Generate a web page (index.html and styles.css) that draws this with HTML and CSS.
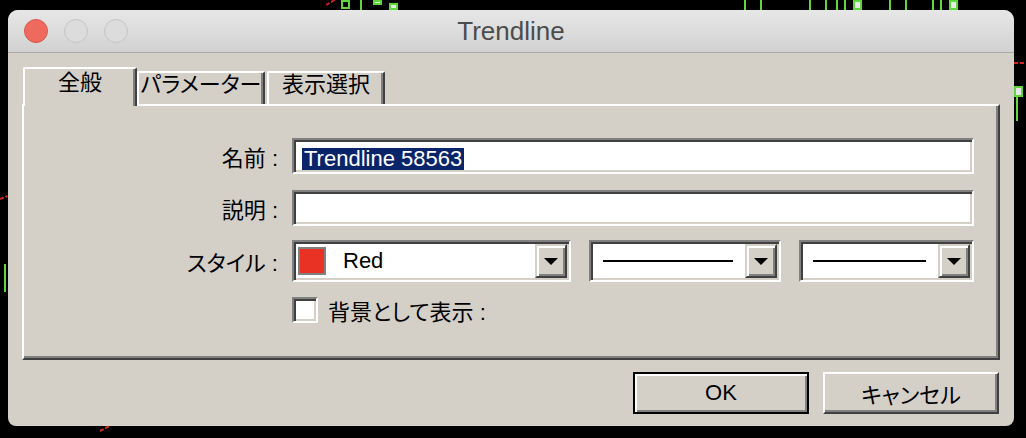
FILE: index.html
```html
<!DOCTYPE html>
<html lang="ja">
<head>
    <meta charset="UTF-8">
    <title>Trendline</title>
    <link rel="stylesheet" href="styles.css">
</head>
<body>
    <!-- chart behind the dialog -->
    <div class="chart">
        <span class="dash" style="left:326px;top:4px;width:16px;transform:rotate(-30deg)"></span>
        <span class="box" style="left:341px;top:0;height:9px"></span>
        <span class="wick" style="left:360px;top:0;height:10px"></span>
        <span class="box white" style="left:373px;top:0;height:5px"></span>
        <span class="box white" style="left:389px;top:3px;height:7px"></span>
        <span class="wick" style="left:744px;top:0;height:10px"></span>
        <span class="wick" style="left:760px;top:0;height:10px"></span>
        <span class="wick" style="left:809px;top:0;height:10px"></span>
        <span class="wick" style="left:825px;top:0;height:10px"></span>
        <span class="wick" style="left:836px;top:0;height:10px"></span>
        <span class="wick" style="left:844px;top:0;height:10px"></span>
        <span class="box white" style="left:853px;top:0;height:10px"></span>
        <span class="wick" style="left:889px;top:0;height:10px"></span>
        <span class="wick" style="left:905px;top:0;height:10px"></span>
        <span class="wick" style="left:932px;top:0;height:10px"></span>
        <span class="wick" style="left:940px;top:0;height:10px"></span>
        <span class="box white" style="left:949px;top:0;height:10px"></span>
        <span class="dash" style="left:1014px;top:62px;width:12px"></span>
        <span class="box white" style="left:1014px;top:86px;height:11px"></span>
        <span class="wick" style="left:1016px;top:97px;height:24px"></span>
        <span class="dash" style="left:0;top:198px;width:8px;transform:rotate(-20deg)"></span>
        <span class="wick" style="left:4px;top:264px;height:28px"></span>
        <span class="dash" style="left:100px;top:430px;width:22px;transform:rotate(-28deg)"></span>
    </div>

    <div class="window">
        <div class="titlebar">
            <div class="lights">
                <span class="light close"></span>
                <span class="light"></span>
                <span class="light"></span>
            </div>
            <div class="title">Trendline</div>
        </div>

        <div class="dialog">
            <div class="tabs">
                <div class="tab active tab-general">全般</div>
                <div class="tab tab-params">パラメーター</div>
                <div class="tab tab-view">表示選択</div>
            </div>

            <div class="panel">
                <div class="row row-name">
                    <label class="label">名前 :</label>
                    <div class="field">
                        <span class="selected">Trendline 58563</span>
                    </div>
                </div>

                <div class="row row-desc">
                    <label class="label">説明 :</label>
                    <div class="field"></div>
                </div>

                <div class="row row-style">
                    <label class="label">スタイル :</label>
                    <div class="select select-color">
                        <span class="swatch"></span>
                        <span class="select-text">Red</span>
                        <span class="drop"><i class="arrow"></i></span>
                    </div>
                    <div class="select select-line">
                        <span class="line-sample"></span>
                        <span class="drop"><i class="arrow"></i></span>
                    </div>
                    <div class="select select-width">
                        <span class="line-sample"></span>
                        <span class="drop"><i class="arrow"></i></span>
                    </div>
                </div>

                <div class="row row-check">
                    <span class="label"></span>
                    <span class="checkbox"></span>
                    <span class="check-label">背景として表示 :</span>
                </div>
            </div>

            <div class="buttons">
                <button class="btn btn-default">OK</button>
                <button class="btn">キャンセル</button>
            </div>
        </div>
    </div>
</body>
</html>
```

FILE: styles.css
```css
* {
    margin: 0;
    padding: 0;
    box-sizing: border-box;
}

body {
    background: #000;
    width: 1026px;
    height: 438px;
    overflow: hidden;
    position: relative;
    font-family: "Liberation Sans", "Noto Sans CJK JP", sans-serif;
}

/* chart marks */
.chart span {
    position: absolute;
    display: block;
}

.wick {
    width: 2px;
    background: #5fd63c;
}

.box {
    width: 9px;
    border: 2px solid #5fd63c;
}

.box.white {
    background: #e8e8e8;
}

.dash {
    height: 2px;
    background: repeating-linear-gradient(90deg, #d0281c 0 4px, transparent 4px 6px);
    transform-origin: left center;
}

/* window */
.window {
    position: relative;
    z-index: 1;
    margin: 10px 0 0 8px;
    width: 1006px;
    height: 416px;
    background: #d4d0c8;
    border-radius: 10px 10px 8px 8px;
    overflow: hidden;
}

.titlebar {
    height: 43px;
    background: linear-gradient(#e7e7e7, #d2d2d2);
    border-bottom: 1px solid #a9a9a9;
    display: flex;
    align-items: center;
    position: relative;
}

.lights {
    display: flex;
    gap: 16px;
    padding-left: 16px;
}

.light {
    width: 24px;
    height: 24px;
    border-radius: 50%;
    background: #dcdcdc;
    border: 1px solid #c4c4c4;
}

.light.close {
    background: #ee6a5e;
    border-color: #d8574c;
}

.title {
    position: absolute;
    left: 0;
    right: 0;
    text-align: center;
    font-size: 26px;
    color: #4c4c4c;
    pointer-events: none;
}

/* dialog body */
.dialog {
    padding-top: 14px;
    font-size: 22px;
    color: #000;
}

.tabs {
    display: flex;
    align-items: flex-end;
    padding-left: 15px;
    margin-bottom: -2px;
}

.tab {
    background: #d4d0c8;
    border-top: 2px solid #fff;
    border-left: 2px solid #fff;
    border-right: 2px solid #404040;
    box-shadow: inset -2px 0 #808080;
    border-radius: 2px 2px 0 0;
    text-align: center;
    line-height: 24px;
    height: 33px;
    margin-bottom: 2px;
    font-feature-settings: "palt";
}

.tab.active {
    position: relative;
    z-index: 1;
    height: 39px;
    padding-top: 2px;
    margin-bottom: 0;
}

.tab-general { width: 114px; }
.tab-params { width: 128px; }
.tab-view { width: 118px; margin-left: 2px; }

.panel {
    margin: 0 14px;
    height: 256px;
    border: 2px solid;
    border-color: #fff #404040 #404040 #fff;
    box-shadow: inset -2px -2px #808080;
    padding: 32px 24px 0 14px;
}

.row {
    display: flex;
    align-items: center;
}

.row-desc { margin-top: 16px; }
.row-style { margin-top: 14px; }
.row-check { margin-top: 12px; }

.label {
    width: 240px;
    margin-right: 14px;
    text-align: right;
    flex-shrink: 0;
    font-feature-settings: "palt";
}

/* sunken fields */
.field,
.select,
.checkbox {
    background: #fff;
    border: 2px solid;
    border-color: #808080 #fff #fff #808080;
    box-shadow: inset 2px 2px #404040, inset -2px -2px #d4d0c8;
}

.field {
    flex: 1;
    height: 36px;
    padding: 6px 8px 0;
}

.selected {
    display: inline-block;
    background: #0a246a;
    color: #fff;
    line-height: 22px;
    padding: 0 2px;
}

.select {
    height: 42px;
    padding: 2px;
    display: flex;
    align-items: center;
    margin-right: 18px;
}

.select-color { width: 280px; }
.select-line { width: 192px; }
.select-width { width: 176px; margin-right: 0; }

.swatch {
    width: 28px;
    height: 28px;
    margin-left: 2px;
    background: #e93224;
    border: 2px solid #808080;
}

.select-text {
    flex: 1;
    margin-left: 17px;
}

.line-sample {
    flex: 1;
    height: 2px;
    background: #000;
    margin: 0 12px 0 10px;
}

.drop {
    align-self: stretch;
    width: 32px;
    background: #d4d0c8;
    border: 2px solid;
    border-color: #d4d0c8 #404040 #404040 #d4d0c8;
    box-shadow: inset 2px 2px #fff, inset -2px -2px #808080;
    display: flex;
    align-items: center;
    justify-content: center;
}

.arrow {
    display: block;
    width: 0;
    height: 0;
    border-left: 7px solid transparent;
    border-right: 7px solid transparent;
    border-top: 7px solid #000;
}

.checkbox {
    width: 26px;
    height: 26px;
}

.check-label {
    margin-left: 10px;
    font-feature-settings: "palt";
}

/* bottom buttons */
.buttons {
    display: flex;
    justify-content: flex-end;
    gap: 14px;
    padding-right: 15px;
    margin-top: 12px;
}

.btn {
    width: 176px;
    height: 42px;
    font: inherit;
    color: #000;
    background: #d4d0c8;
    border: 2px solid;
    border-color: #fff #404040 #404040 #fff;
    box-shadow: inset -2px -2px #808080;
    font-feature-settings: "palt";
}

.btn-default {
    border-color: #000;
    box-shadow: inset 2px 2px #fff, inset -2px -2px #808080;
}
```
